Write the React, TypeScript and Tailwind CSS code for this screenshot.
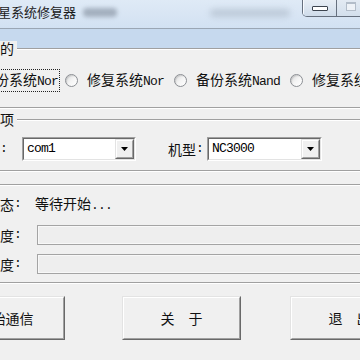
import React from 'react'

const mono = "font-['Liberation_Mono',monospace] text-[13px] tracking-[-0.8px]"

const Radio = ({ children, focus }: { children: React.ReactNode; focus?: boolean }) => (
  <div className="flex items-center gap-[8px] shrink-0">
    <span className="w-[13px] h-[13px] rounded-full border border-[#8c8f94] bg-linear-to-br from-[#d9dadb] via-[#f4f4f4] to-white shadow-[inset_1px_1px_1px_rgba(0,0,0,0.12)]" />
    <span
      className={`whitespace-nowrap leading-[14px] px-[1px] py-[2px] ${focus ? 'outline-1 outline-dotted outline-[#222]' : ''}`}
    >
      {children}
    </span>
  </div>
)

const Combo = ({ text, w }: { text: string; w: string }) => (
  <div className={`${w} h-[24px] flex border border-t-[#a0a0a0] border-l-[#a0a0a0] border-r-white border-b-white shrink-0`}>
    <div className="flex-1 flex border border-t-[#696969] border-l-[#696969] border-r-[#e3e3e3] border-b-[#e3e3e3] bg-white">
      <span className={`flex-1 flex items-center pl-[3px] ${mono} text-black`}>{text}</span>
      <div className="w-[19px] flex border border-t-[#e3e3e3] border-l-[#e3e3e3] border-r-[#696969] border-b-[#696969]">
        <div className="flex-1 flex items-center justify-center border border-t-white border-l-white border-r-[#a0a0a0] border-b-[#a0a0a0] bg-[#f0f0f0]">
          <svg width="7" height="4" viewBox="0 0 7 4">
            <polygon points="0,0 7,0 3.5,4" fill="#000" />
          </svg>
        </div>
      </div>
    </div>
  </div>
)

const Button = ({ children, className }: { children: React.ReactNode; className: string }) => (
  <div className={`${className} w-[119px] h-[44px] shrink-0 flex border border-t-[#e3e3e3] border-l-[#e3e3e3] border-r-[#696969] border-b-[#696969]`}>
    <div className="flex-1 flex items-center justify-center border border-t-white border-l-white border-r-[#a0a0a0] border-b-[#a0a0a0] bg-[#f0f0f0] whitespace-nowrap leading-[14px]">
      {children}
    </div>
  </div>
)

const Progress = () => (
  <div className="ml-[16px] flex-1 -mr-[20px] h-[20px] border border-[#a4a4a4] bg-[#eeeeee] shadow-[inset_0_0_0_1px_#f8f8f8]" />
)

const Label = ({ children }: { children: React.ReactNode }) => (
  <div className="absolute -top-[8px] left-0 flex justify-end w-[17px] bg-[#f0f0f0] pr-[3px] whitespace-nowrap leading-[14px]">
    {children}
  </div>
)

const App = () => {
  return (
    <div className="w-[360px] h-[360px] overflow-hidden bg-[#c6d9ee] font-['Noto_Sans_CJK_SC',sans-serif] text-[14px] text-[#111]">
      {/* title bar */}
      <div className="h-[29px] flex items-start border-b border-[#9aa6b4] bg-linear-to-b from-[#dfeaf6] to-[#d2e1f2]">
        <span className="-ml-[2px] mt-[5px] text-[13px] leading-[13px] whitespace-nowrap text-[#1b1b1b]">星系统修复器</span>
        <span className="ml-[7px] mt-[8px] w-[34px] h-[9px] rounded bg-[#8d99a8] blur-[2px] opacity-70 shrink-0" />
        <span className="ml-[93px] mt-[9px] w-[80px] h-[8px] rounded bg-[#aab7c6] blur-[3px] opacity-60 shrink-0" />
        <div className="ml-[12px] -mt-[1px] h-[18px] flex shrink-0 w-[70px] rounded-bl-[5px] border border-t-0 border-[#66707e] overflow-hidden">
          <div className="w-[34px] flex items-center justify-center bg-linear-to-b from-[#e9eff6] to-[#cfdcea] border-r border-[#66707e] shadow-[inset_1px_0_0_#f8fbff]">
            <span className="mt-[1px] w-[16px] h-[5px] rounded-[1px] bg-white border border-[#3d4550]" />
          </div>
          <div className="flex-1 flex items-start pt-[3px] pl-[9px] bg-linear-to-b from-[#e4ebf3] to-[#d3dfec]">
            <span className="w-[10px] h-[9px] border border-[#b3bdc9] border-t-2 bg-[#eef2f7]" />
          </div>
        </div>
      </div>

      {/* client */}
      <div className="h-[328px] bg-[#f0f0f0] border-b border-[#8f99a6]">
        {/* group 1 */}
        <div className="relative mt-[19px] h-[60px] pt-[4px] flex items-center border-y border-[#a0a0a0] shadow-[inset_0_1px_0_#fff,0_1px_0_#fff]">
          <Label>目的</Label>
          <div className="-ml-[41px] flex items-center">
            <Radio focus>
              备份系统<span className={mono}>Nor</span>
            </Radio>
            <div className="ml-[6px]">
              <Radio>
                修复系统<span className={mono}>Nor</span>
              </Radio>
            </div>
            <div className="ml-[9px]">
              <Radio>
                备份系统<span className={mono}>Nand</span>
              </Radio>
            </div>
            <div className="ml-[9px]">
              <Radio>
                修复系统<span className={mono}>Nand</span>
              </Radio>
            </div>
          </div>
        </div>

        {/* group 2 */}
        <div className="relative mt-[11px] h-[52px] pt-[8px] flex items-center border-y border-[#a0a0a0] shadow-[inset_0_1px_0_#fff,0_1px_0_#fff]">
          <Label>选项</Label>
          <div className="flex items-center w-[7px] justify-end shrink-0 whitespace-nowrap">
            串口<span className={mono}>:</span>
          </div>
          <div className="ml-[15px]">
            <Combo text="com1" w="w-[114px]" />
          </div>
          <div className="ml-[32px] flex items-center whitespace-nowrap">
            机型<span className={mono}>:</span>
          </div>
          <div className="ml-[4px]">
            <Combo text="NC3000" w="w-[115px]" />
          </div>
        </div>

        {/* group 3 */}
        <div className="mt-[13px] h-[99px] pt-[9px] flex flex-col border-y border-[#a0a0a0] shadow-[inset_0_1px_0_#fff,0_1px_0_#fff]">
          <div className="h-[20px] flex items-center">
            <div className="w-[21px] flex justify-end whitespace-nowrap leading-[14px]">
              状态<span className={mono}>:</span>
            </div>
            <span className="ml-[14px] whitespace-nowrap leading-[14px]">
              等待开始<span className={mono}>...</span>
            </span>
          </div>
          <div className="mt-[11px] h-[20px] flex items-center">
            <div className="w-[21px] flex justify-end whitespace-nowrap leading-[14px]">
              总进度<span className={mono}>:</span>
            </div>
            <Progress />
          </div>
          <div className="mt-[9px] h-[20px] flex items-center">
            <div className="w-[21px] flex justify-end whitespace-nowrap leading-[14px]">
              当前进度<span className={mono}>:</span>
            </div>
            <Progress />
          </div>
        </div>

        {/* buttons */}
        <div className="mt-[13px] flex">
          <Button className="-ml-[54px]">开始通信</Button>
          <Button className="ml-[57px]">关　于</Button>
          <Button className="ml-[49px]">退　出</Button>
        </div>
      </div>
    </div>
  )
}

export default App
